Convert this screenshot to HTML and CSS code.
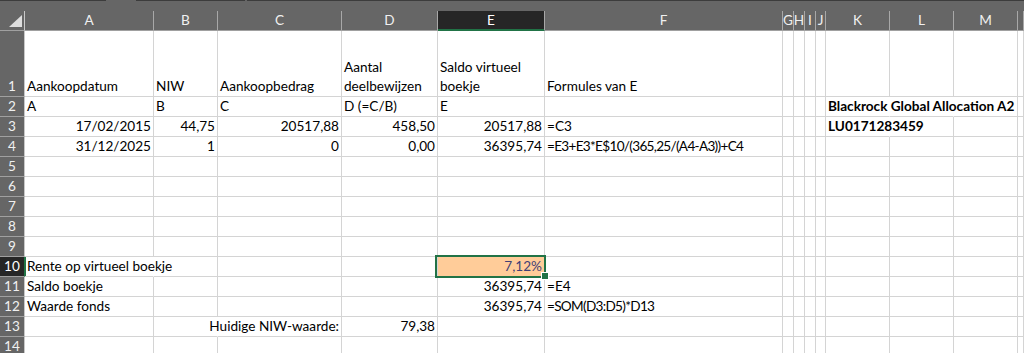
FILE: index.html
```html
<!DOCTYPE html>
<html lang="nl">
<head>
    <meta charset="UTF-8">
    <meta name="viewport" content="width=device-width, initial-scale=1.0">
    <title>Blackrock Global Allocation A2</title>
    <link rel="stylesheet" href="styles.css">
</head>
<body>
<div class="app">
    <div class="topbar"></div>
    <div class="sheet">
        <div class="row head">
            <div class="c corner"></div>
            <div class="c">A</div><div class="c">B</div><div class="c">C</div><div class="c">D</div>
            <div class="c sel">E</div><div class="c">F</div><div class="c">G</div><div class="c">H</div>
            <div class="c">I</div><div class="c">J</div><div class="c">K</div><div class="c">L</div>
            <div class="c">M</div><div class="c"></div>
        </div>
        <div class="row tall">
            <div class="c rh">1</div>
            <div class="c">Aankoopdatum</div>
            <div class="c">NIW</div>
            <div class="c">Aankoopbedrag</div>
            <div class="c"><span>Aantal<br>deelbewijzen</span></div>
            <div class="c"><span>Saldo virtueel<br>boekje</span></div>
            <div class="c">Formules van E</div>
            <div class="c"></div><div class="c"></div><div class="c"></div><div class="c"></div>
            <div class="c"></div><div class="c"></div><div class="c"></div><div class="c"></div>
        </div>
        <div class="row">
            <div class="c rh">2</div>
            <div class="c">A</div>
            <div class="c">B</div>
            <div class="c">C</div>
            <div class="c">D (=C/B)</div>
            <div class="c">E</div>
            <div class="c"></div>
            <div class="c"></div><div class="c"></div><div class="c"></div><div class="c"></div>
            <div class="c b nl">Blackrock Global Allocation A2</div>
            <div class="c nl"></div><div class="c"></div><div class="c"></div>
        </div>
        <div class="row">
            <div class="c rh">3</div>
            <div class="c r">17/02/2015</div>
            <div class="c r">44,75</div>
            <div class="c r">20517,88</div>
            <div class="c r">458,50</div>
            <div class="c r">20517,88</div>
            <div class="c">=C3</div>
            <div class="c"></div><div class="c"></div><div class="c"></div><div class="c"></div>
            <div class="c b nl">LU0171283459</div>
            <div class="c"></div><div class="c"></div><div class="c"></div>
        </div>
        <div class="row">
            <div class="c rh">4</div>
            <div class="c r">31/12/2025</div>
            <div class="c r">1</div>
            <div class="c r">0</div>
            <div class="c r">0,00</div>
            <div class="c r">36395,74</div>
            <div class="c formula">=E3+E3*E$10/(365,25/(A4-A3))+C4</div>
            <div class="c"></div><div class="c"></div><div class="c"></div><div class="c"></div>
            <div class="c"></div><div class="c"></div><div class="c"></div><div class="c"></div>
        </div>
        <div class="row">
            <div class="c rh">5</div>
            <div class="c"></div><div class="c"></div><div class="c"></div><div class="c"></div><div class="c"></div><div class="c"></div><div class="c"></div>
            <div class="c"></div><div class="c"></div><div class="c"></div><div class="c"></div><div class="c"></div><div class="c"></div><div class="c"></div>
        </div>
        <div class="row">
            <div class="c rh">6</div>
            <div class="c"></div><div class="c"></div><div class="c"></div><div class="c"></div><div class="c"></div><div class="c"></div><div class="c"></div>
            <div class="c"></div><div class="c"></div><div class="c"></div><div class="c"></div><div class="c"></div><div class="c"></div><div class="c"></div>
        </div>
        <div class="row">
            <div class="c rh">7</div>
            <div class="c"></div><div class="c"></div><div class="c"></div><div class="c"></div><div class="c"></div><div class="c"></div><div class="c"></div>
            <div class="c"></div><div class="c"></div><div class="c"></div><div class="c"></div><div class="c"></div><div class="c"></div><div class="c"></div>
        </div>
        <div class="row">
            <div class="c rh">8</div>
            <div class="c"></div><div class="c"></div><div class="c"></div><div class="c"></div><div class="c"></div><div class="c"></div><div class="c"></div>
            <div class="c"></div><div class="c"></div><div class="c"></div><div class="c"></div><div class="c"></div><div class="c"></div><div class="c"></div>
        </div>
        <div class="row">
            <div class="c rh">9</div>
            <div class="c"></div><div class="c"></div><div class="c"></div><div class="c"></div><div class="c"></div><div class="c"></div><div class="c"></div>
            <div class="c"></div><div class="c"></div><div class="c"></div><div class="c"></div><div class="c"></div><div class="c"></div><div class="c"></div>
        </div>
        <div class="row">
            <div class="c rh sel">10</div>
            <div class="c nl">Rente op virtueel boekje</div>
            <div class="c"></div>
            <div class="c"></div>
            <div class="c"></div>
            <div class="c r input">7,12%</div>
            <div class="c"></div>
            <div class="c"></div><div class="c"></div><div class="c"></div><div class="c"></div>
            <div class="c"></div><div class="c"></div><div class="c"></div><div class="c"></div>
        </div>
        <div class="row">
            <div class="c rh">11</div>
            <div class="c">Saldo boekje</div>
            <div class="c"></div>
            <div class="c"></div>
            <div class="c"></div>
            <div class="c r">36395,74</div>
            <div class="c">=E4</div>
            <div class="c"></div><div class="c"></div><div class="c"></div><div class="c"></div>
            <div class="c"></div><div class="c"></div><div class="c"></div><div class="c"></div>
        </div>
        <div class="row">
            <div class="c rh">12</div>
            <div class="c">Waarde fonds</div>
            <div class="c"></div>
            <div class="c"></div>
            <div class="c"></div>
            <div class="c r">36395,74</div>
            <div class="c formula">=SOM(D3:D5)*D13</div>
            <div class="c"></div><div class="c"></div><div class="c"></div><div class="c"></div>
            <div class="c"></div><div class="c"></div><div class="c"></div><div class="c"></div>
        </div>
        <div class="row">
            <div class="c rh">13</div>
            <div class="c"></div>
            <div class="c nl"></div>
            <div class="c r">Huidige NIW-waarde:</div>
            <div class="c r">79,38</div>
            <div class="c"></div>
            <div class="c"></div>
            <div class="c"></div><div class="c"></div><div class="c"></div><div class="c"></div>
            <div class="c"></div><div class="c"></div><div class="c"></div><div class="c"></div>
        </div>
        <div class="row">
            <div class="c rh">14</div>
            <div class="c"></div><div class="c"></div><div class="c"></div><div class="c"></div><div class="c"></div><div class="c"></div><div class="c"></div>
            <div class="c"></div><div class="c"></div><div class="c"></div><div class="c"></div><div class="c"></div><div class="c"></div><div class="c"></div>
        </div>
    </div>
    <div class="selection"></div>
    <div class="fillhandle"></div>
</div>
</body>
</html>
```

FILE: styles.css
```css
* {
    box-sizing: border-box;
}
body {
    margin: 0;
    overflow: hidden;
    font-family: Lato, 'Liberation Sans', sans-serif;
    font-size: 13.6px;
    color: #000;
    background-color: #fff;
}
.app {
    position: relative;
}
.topbar {
    height: 11px;
    background:
        linear-gradient(to right, #3c3c3c 106px, #666 106px, #666 136px, #3c3c3c 136px, #3c3c3c 245px, #666 245px, #666 247px, #3c3c3c 247px) top / 100% 1px no-repeat,
        #666;
}
.row {
    display: grid;
    grid-template-columns: 25px 129px 64px 124px 96px 107px 238px 11px 11px 11px 10px 64px 64px 64px 1fr;
    height: 20px;
}
.row.tall {
    height: 66px;
}
.c {
    display: flex;
    align-items: flex-end;
    padding: 0 2px;
    line-height: 19px;
    white-space: nowrap;
    border-right: 1px solid #d4d4d4;
    border-bottom: 1px solid #d4d4d4;
}
.c.r {
    justify-content: flex-end;
}
.c.b {
    font-weight: bold;
}
.c.nl {
    border-right-color: transparent;
}
.c.formula {
    letter-spacing: -0.7px;
}
.c.input {
    background-color: #ffcc99;
    color: #3f3f76;
}

/* column and row headers */
.head .c {
    padding: 0;
    justify-content: center;
    background-color: #666;
    color: #f0f0f0;
    border-right-color: #a8a8a8;
    border-bottom-color: #a0a0a0;
}
.head .c.sel {
    background-color: #262626;
    color: #fff;
    border-bottom-color: #217346;
    box-shadow: inset 0 -1px 0 #217346;
}
.head .corner {
    justify-content: flex-end;
    padding: 0 2px 3px 0;
    border-right-color: #c8c8c8;
}
.head .corner::after {
    content: '';
    width: 0;
    height: 0;
    border-left: 13px solid transparent;
    border-bottom: 12px solid #dedede;
}
.c.rh {
    padding: 0;
    justify-content: center;
    background-color: #666;
    color: #f0f0f0;
    border-right-color: #c8c8c8;
    border-bottom-color: #a0a0a0;
}
.c.rh.sel {
    background-color: #262626;
    color: #fff;
    border-right-color: #217346;
    box-shadow: 1px 0 0 #217346;
}

/* active cell E10 */
.selection {
    position: absolute;
    left: 435px;
    top: 255px;
    width: 111px;
    height: 23px;
    border: 2px solid #217346;
}
.fillhandle {
    position: absolute;
    left: 541px;
    top: 272px;
    width: 8px;
    height: 8px;
    background-color: #217346;
    border: 1px solid #fff;
}
```
